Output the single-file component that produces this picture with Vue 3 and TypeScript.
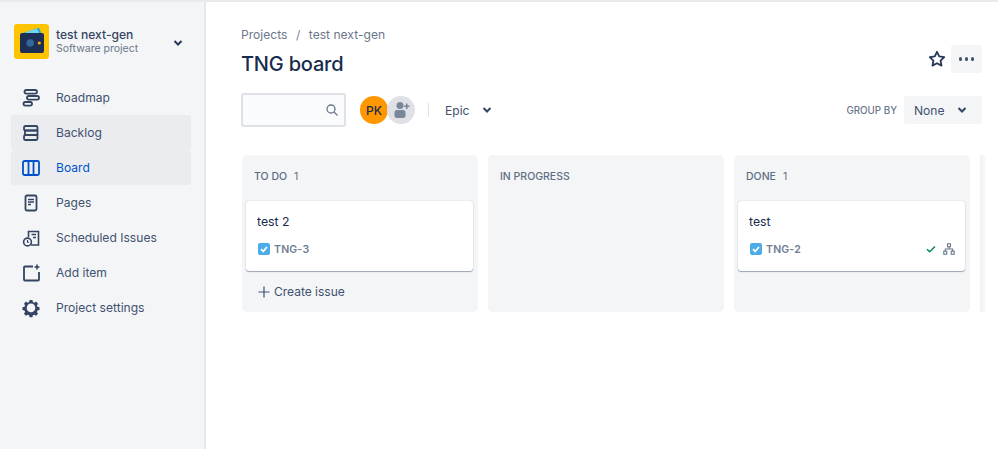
<script setup lang="ts">
interface NavItem { label: string; icon: string; hover?: boolean; active?: boolean }
const nav: NavItem[] = [
  { label: 'Roadmap', icon: 'roadmap' },
  { label: 'Backlog', icon: 'backlog', hover: true },
  { label: 'Board', icon: 'board', hover: true, active: true },
  { label: 'Pages', icon: 'pages' },
  { label: 'Scheduled Issues', icon: 'sched' },
  { label: 'Add item', icon: 'add' },
  { label: 'Project settings', icon: 'gear' },
]
</script>

<template>
  <div class="page">
    <aside class="side">
      <div class="proj">
        <svg class="logo" width="35" height="35" viewBox="0 0 35 35">
          <rect width="35" height="35" rx="3" fill="#ffc400" />
          <path d="M9 9 L25 3.800 L28 11 L9 11Z" fill="#2d9fd8" />
          <path d="M12 8 L23 4.500 L26 11 L12 11Z" fill="#6fd6ef" />
          <rect x="6" y="9" width="24" height="20" rx="2" fill="#1d2f55" />
          <circle cx="16.200" cy="19" r="3.800" fill="#35679f" />
          <circle cx="25.300" cy="19" r="1.600" fill="#ffab00" />
        </svg>
        <div class="proj-text">
          <div class="proj-name">test next-gen</div>
          <div class="proj-sub">Software project</div>
        </div>
        <svg class="proj-chev" width="10" height="8" viewBox="0 0 10 8"><path d="M1.5 2 L5 5.5 L8.5 2" fill="none" stroke="#253858" stroke-width="2" /></svg>
      </div>
      <nav class="nav">
        <div v-for="n in nav" :key="n.label" class="item" :class="{ hov: n.hover, act: n.active }">
          <svg class="ni" width="24" height="24" viewBox="0 0 24 24" fill="none" stroke="currentColor" stroke-width="1.800">
            <template v-if="n.icon === 'roadmap'">
              <rect x="5.500" y="4" width="12.500" height="3.600" rx="1.800" /><rect x="8" y="10" width="12" height="3.600" rx="1.800" /><rect x="4.500" y="16" width="8.500" height="3.600" rx="1.800" />
            </template>
            <template v-else-if="n.icon === 'backlog'">
              <rect x="5" y="5" width="13.500" height="4.500" rx="1.500" /><rect x="6" y="9.500" width="12.500" height="4.500" rx="0" /><rect x="5" y="14" width="13.500" height="5" rx="1.500" />
            </template>
            <template v-else-if="n.icon === 'board'">
              <rect x="4" y="5" width="16" height="14" rx="1.500" /><path d="M9.500 5v14M14.500 5v14" />
            </template>
            <template v-else-if="n.icon === 'pages'">
              <rect x="6.500" y="4.500" width="11" height="15" rx="1.500" /><path d="M9 8.500h6M9 11h6M9 13.500h3" stroke-width="1.300" />
            </template>
            <template v-else-if="n.icon === 'sched'">
              <path d="M9.500 11V5.500h10v13.500H12" stroke-width="1.600" /><path d="M12.500 8.500h4.500M14 11.500h3" stroke-width="1.300" /><circle cx="8.500" cy="16" r="3.900" stroke-width="1.600" /><path d="M8.500 14v2.300h1.500" stroke-width="1.100" />
            </template>
            <template v-else-if="n.icon === 'add'">
              <path d="M14 5.500H6a1 1 0 0 0-1 1v12a1 1 0 0 0 1 1h13a1 1 0 0 0 1-1V11" /><path d="M18 3.500v5M15.500 6h5" stroke-width="1.600" />
            </template>
            <template v-else>
              <path d="M10.400 4h3.200l.5 2.300 1.500.7 2-1.200 2.200 2.300-1.200 2 .6 1.500 2.300.6v3l-2.300.6-.6 1.500 1.200 2-2.200 2.200-2-1.200-1.500.6-.5 2.300h-3.200l-.5-2.300-1.500-.6-2 1.200-2.200-2.200 1.200-2-.6-1.500-2.300-.6v-3l2.300-.6.6-1.500-1.200-2L6.400 5.800l2 1.200 1.500-.7z" fill="currentColor" stroke="none" transform="translate(1.200 1.200) scale(.9) translate(0 -.9)" />
              <circle cx="12" cy="11.900" r="4.300" fill="#f4f5f7" stroke="none" />
            </template>
          </svg>
          <span>{{ n.label }}</span>
        </div>
      </nav>
    </aside>

    <main class="main">
      <div class="crumbs"><span>Projects</span><span class="sep">/</span><span>test next-gen</span></div>
      <div class="title-row">
        <h1>TNG board</h1>
        <div class="title-actions">
          <svg width="20" height="20" viewBox="0 0 20 20"><path d="M10 2.800l2.200 4.600 5 .7-3.600 3.500.9 5-4.500-2.400-4.500 2.400.9-5L2.800 8.100l5-.7z" fill="none" stroke="#253858" stroke-width="1.800" stroke-linejoin="round" /></svg>
          <div class="more"><i></i><i></i><i></i></div>
        </div>
      </div>
      <div class="filters">
        <div class="search">
          <svg width="14" height="14" viewBox="0 0 14 14" fill="none" stroke="#6b778c" stroke-width="1.300"><circle cx="6" cy="6" r="4" /><path d="M9 9l3.500 3.500" /></svg>
        </div>
        <div class="avatars">
          <div class="av pk">PK</div>
          <div class="av addp">
            <svg width="20" height="20" viewBox="0 0 20 20" fill="#7a869a"><circle cx="9" cy="5.500" r="3.500" /><rect x="3.500" y="10" width="11" height="8" rx="2.500" /><path d="M15 3.500h1.500V5.500H18.500V7H16.500V9H15V7H13V5.500H15z" /></svg>
          </div>
        </div>
        <div class="vsep"></div>
        <div class="epic"><span>Epic</span><svg width="10" height="8" viewBox="0 0 10 8"><path d="M1.500 2 L5 5.500 L8.500 2" fill="none" stroke="#344563" stroke-width="2" /></svg></div>
        <div class="group-label">GROUP BY</div>
        <div class="none"><span>None</span><svg width="10" height="8" viewBox="0 0 10 8"><path d="M1.500 2 L5 5.500 L8.500 2" fill="none" stroke="#344563" stroke-width="2" /></svg></div>
      </div>
      <div class="board">
        <section class="col">
          <header class="col-h"><span>TO DO</span><span class="cnt">1</span></header>
          <div class="card">
            <div class="card-t">test 2</div>
            <div class="card-m">
              <svg class="chk" width="12" height="12" viewBox="0 0 12 12"><rect width="12" height="12" rx="2" fill="#4bade8" /><path d="M3 6.200l2.200 2.200L9 4" fill="none" stroke="#fff" stroke-width="1.800" /></svg>
              <span class="key">TNG-3</span>
            </div>
          </div>
          <div class="create">
            <svg width="12" height="12" viewBox="0 0 12 12"><path d="M6 .5v11M.5 6h11" stroke="#42526e" stroke-width="1.200" /></svg>
            <span>Create issue</span>
          </div>
        </section>
        <section class="col">
          <header class="col-h"><span>IN PROGRESS</span></header>
        </section>
        <section class="col">
          <header class="col-h"><span>DONE</span><span class="cnt">1</span></header>
          <div class="card">
            <div class="card-t">test</div>
            <div class="card-m">
              <svg class="chk" width="12" height="12" viewBox="0 0 12 12"><rect width="12" height="12" rx="2" fill="#4bade8" /><path d="M3 6.200l2.200 2.200L9 4" fill="none" stroke="#fff" stroke-width="1.800" /></svg>
              <span class="key">TNG-2</span>
              <svg class="done" width="10" height="8" viewBox="0 0 10 8"><path d="M1 4.200l2.700 2.500L9 1.500" fill="none" stroke="#00875a" stroke-width="1.500" /></svg>
              <svg class="tree" width="12" height="12" viewBox="0 0 12 12" fill="none" stroke="#6b778c" stroke-width="1.100"><rect x="4.500" y=".8" width="3" height="3" /><rect x=".8" y="8.200" width="3" height="3" /><rect x="8.200" y="8.200" width="3" height="3" /><path d="M6 3.800V6M2.300 8.200V6h7.400v2.200" /></svg>
            </div>
          </div>
        </section>
        <section class="col col-cut"></section>
      </div>
    </main>
  </div>
</template>

<style>
html, body { margin: 0; background: #fff; overflow: hidden; }
</style>

<style scoped>
.page {
  width: 998px; height: 449px; display: flex; overflow: hidden; box-sizing: border-box;
  border-top: 2px solid #e9eaec;
  font-family: Inter, "Noto Sans", sans-serif; color: #172b4d;
}
.side {
  width: 206px; flex: none; box-sizing: border-box; background: #f4f5f7;
  border-right: 2px solid #e6e8ec; padding: 22px 13px 0 11px;
}
.proj { display: flex; align-items: center; padding-left: 3px; height: 35px; }
.logo { flex: none; }
.proj-text { margin-left: 7px; flex: 1; }
.proj-name { font-size: 12.100px; font-weight: 500; color: #344563; line-height: 14px; }
.proj-sub { font-size: 10.500px; color: #6b778c; line-height: 13px; }
.proj-chev { margin-right: 8px; margin-top: 2px; }
.nav { margin-top: 21px; }
.item {
  height: 35px; display: flex; align-items: center; color: #42526e;
  font-size: 12.100px; border-radius: 3px;
}
.item.hov { background: #ebecf0; }
.item.act { color: #0052cc; }
.item .ni { margin-left: 8px; margin-right: 13px; color: #344563; }
.item.act .ni { color: #0052cc; }
.main { flex: 1; min-width: 0; padding: 25px 0 0 35px; }
.crumbs { display: flex; gap: 8.500px; font-size: 12.100px; color: #6b778c; line-height: 15px; }
.sep { color: #7a869a; }
.title-row { display: flex; justify-content: space-between; align-items: flex-start; margin-top: 7px; }
h1 { margin: 0; font-size: 20px; font-weight: 500; line-height: 30px; color: #172b4d; letter-spacing: -.2px; }
.title-actions { display: flex; align-items: center; gap: 4px; margin-right: 16px; margin-top: -4px; }
.more {
  width: 31px; height: 28px; background: #f4f5f7; border-radius: 3px;
  display: flex; align-items: center; justify-content: center; gap: 2.500px;
}
.more i { width: 3.500px; height: 3.500px; border-radius: 50%; background: #42526e; }
.filters { display: flex; align-items: center; margin-top: 13px; height: 36px; padding-right: 16px; }
.search {
  width: 105px; height: 34px; box-sizing: border-box; border: 2px solid #dfe1e6; border-radius: 3px;
  background: #fafbfc; display: flex; align-items: center; justify-content: flex-end; padding-right: 5px;
}
.avatars { display: flex; margin-left: 14px; }
.av { width: 28px; height: 28px; border-radius: 50%; display: flex; align-items: center; justify-content: center; }
.pk { background: #ff9800; font-size: 12px; font-weight: 500; color: #172b4d; }
.addp { background: #dfe1e6; margin-left: -1px; }
.vsep { width: 1px; height: 14px; background: #dfe1e6; margin-left: 13px; }
.epic { display: flex; align-items: center; gap: 12px; margin-left: 16px; font-size: 12.100px; color: #42526e; }
.group-label { margin-left: auto; font-size: 9.800px; font-weight: 500; color: #6b778c; }
.none {
  margin-left: 7px; width: 78px; height: 28px; box-sizing: border-box; background: #f4f5f7; border-radius: 3px;
  display: flex; align-items: center; padding-left: 10px; font-size: 12.100px; color: #42526e;
}
.none svg { margin-left: 12px; }
.board { display: flex; gap: 10px; margin: 27px 0 0 1px; }
.col { width: 236px; height: 157px; flex: none; background: #f4f5f7; border-radius: 5px; box-sizing: border-box; padding: 0 5px 0 4px; }
.col-cut { width: 6px; padding: 0; border-radius: 0; background: linear-gradient(to right, #f0f1f3, #fbfbfc); }
.col-h { display: flex; gap: 7px; height: 46px; align-items: center; padding: 0 8px 4px; font-size: 10.500px; font-weight: 500; color: #5e6c84; box-sizing: border-box; }
.cnt { font-size: 10.500px; font-weight: 400; }
.card {
  height: 70px; background: #fff; border-radius: 3px; box-sizing: border-box; padding: 13px 7px 0 12px;
  box-shadow: 0 1px 1px rgba(9,30,66,.35), 0 0 1px rgba(9,30,66,.31);
}
.card-t { font-size: 12.300px; line-height: 16px; color: #172b4d; margin-left: -1px; }
.card-m { display: flex; align-items: center; margin-top: 11px; height: 16px; padding-right: 3px; }
.chk { flex: none; }
.key { margin-left: 4px; font-size: 10.500px; font-weight: 600; color: #6f7d94; letter-spacing: .2px; }
.done { margin-left: auto; }
.tree { margin-left: 7px; }
.create { display: flex; align-items: center; gap: 4px; margin: 13px 0 0 12px; font-size: 12px; color: #42526e; }
</style>
